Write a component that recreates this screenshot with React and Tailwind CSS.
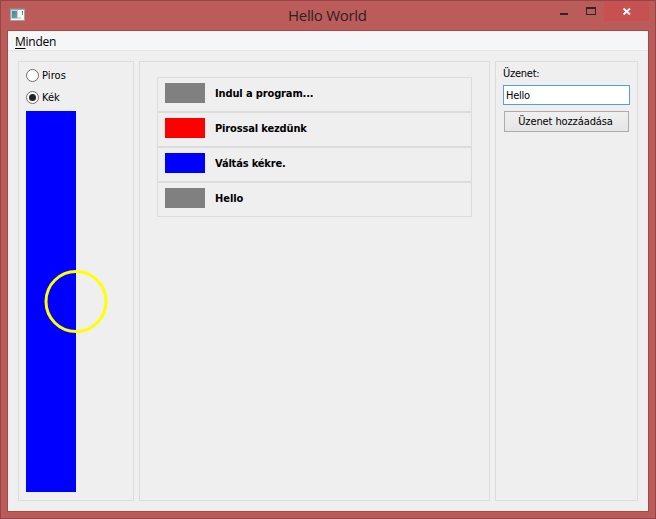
const messages = [
  { text: 'Indul a program...', swatch: 'bg-[#808080]', tracking: 'tracking-[-0.13px]' },
  { text: 'Pirossal kezdünk', swatch: 'bg-[#ff0000]', tracking: 'tracking-[-0.15px]' },
  { text: 'Váltás kékre.', swatch: 'bg-[#0000ff]', tracking: 'tracking-[-0.17px]' },
  { text: 'Hello', swatch: 'bg-[#808080]', tracking: 'tracking-[-0.05px]' },
];

function AppIcon() {
  return (
    <svg width="15" height="13" viewBox="0 0 15 13" shapeRendering="crispEdges">
      <defs>
        <linearGradient id="screen" x1="0" y1="0" x2="1" y2="1">
          <stop offset="0" stopColor="#4c79ab" />
          <stop offset="1" stopColor="#58b888" />
        </linearGradient>
        <linearGradient id="side" x1="0" y1="0" x2="0" y2="1">
          <stop offset="0" stopColor="#2f5fa8" />
          <stop offset="1" stopColor="#58b888" />
        </linearGradient>
      </defs>
      <rect width="15" height="13" fill="#a3a3a3" />
      <rect x="1" y="2" width="13" height="10" fill="#f6f8f8" />
      <rect x="0" y="0" width="15" height="1" fill="#7e8c90" />
      <rect x="1" y="2" width="7" height="9" fill="#c5d3d7" />
      <rect x="2" y="3" width="5" height="7" fill="url(#screen)" />
      <rect x="12" y="3" width="1" height="4" fill="url(#side)" />
      <rect x="8" y="9" width="3" height="2" fill="#d3d5d6" />
    </svg>
  );
}

function TitleBar() {
  return (
    <div className="flex h-[29px] items-start">
      <div className="w-[90px] pl-[9px] pt-[7px]">
        <AppIcon />
      </div>
      <div className="flex-1 pl-[197px] pt-[3px] font-['Open_Sans',sans-serif] text-[15px] leading-[22px] tracking-[-0.3px] text-[#2b2222] whitespace-nowrap">
        Hello World
      </div>
      <svg className="mr-1.5" width="97" height="20" viewBox="0 0 97 20">
        <rect x="8" y="12" width="8" height="2" fill="#2b2727" />
        <path d="M34 6h10v8H34zM35 8v5h8V8z" fill="#2b2727" fillRule="evenodd" />
        <rect x="52" y="0" width="45" height="20" fill="#c75050" />
        <path d="M71.5 7.5l6.5 6M78 7.5l-6.5 6" stroke="#fff" strokeWidth="1.8" />
      </svg>
    </div>
  );
}

function Radio({ label, checked, spacing }) {
  return (
    <div className="flex h-[22px] items-start gap-[3px] pt-1">
      <svg width="13" height="13" viewBox="0 0 13 13">
        <circle cx="6.5" cy="6.5" r="6" fill="#fff" stroke="#6d6d6d" />
        {checked && <circle cx="6.5" cy="6.5" r="3.5" fill="#222" />}
      </svg>
      <span className={spacing}>{label}</span>
    </div>
  );
}

export default function App() {
  return (
    <div className="flex h-[519px] w-[656px] flex-col overflow-hidden border border-[#934646] bg-[#bc5c5a] font-['DejaVu_Sans_Condensed','DejaVu_Sans',sans-serif] text-[11px] leading-[14px] text-black">
      <TitleBar />
      <div className="mx-1.5 flex h-[482px] w-[642px] flex-col border border-[#a04b4a] bg-[#efefef]">
        <div className="h-5 border-b border-[#e5e6e8] bg-[#f5f6f8] pl-[7px] font-['Open_Sans',sans-serif] text-[12px] leading-[21px] tracking-[-0.25px]">
          <span className="underline decoration-1 underline-offset-2">M</span>inden
        </div>
        <div className="mx-2.5 mt-2.5 flex h-[440px] gap-[5px]">
          <section className="relative w-[116px] border border-[#dcdcdc] pl-[7px] pt-[3px]">
            <Radio label="Piros" spacing="tracking-[0.1px]" />
            <Radio label="Kék" checked spacing="tracking-[0px]" />
            <div className="mt-0.5 h-[381px] w-[50px] bg-[#0000ff]" />
            <svg className="absolute left-[25px] top-[207px]" width="64" height="65" viewBox="0 0 64 65">
              <circle cx="32" cy="32.5" r="30" fill="none" stroke="#ffff00" strokeWidth="3" />
            </svg>
          </section>
          <section className="w-[351px] border border-[#dcdcdc] pl-[17px] pt-[15px]">
            {messages.map((m) => (
              <div key={m.text} className="flex h-[35px] w-[315px] border border-[#dcdcdc] pl-[7px] pt-[5px]">
                <div className={`h-5 w-10 ${m.swatch}`} />
                <span className={`ml-2.5 font-bold leading-[22px] whitespace-nowrap ${m.tracking}`}>{m.text}</span>
              </div>
            ))}
          </section>
          <section className="w-[143px] border border-[#dcdcdc] pl-[7px] pt-[5px]">
            <div className="tracking-[-0.25px]">Üzenet:</div>
            <div className="mt-1 h-5 w-[127px] border border-[#569de5] bg-white pl-0.5 leading-[20px] tracking-[-0.25px]">Hello</div>
            <button className="ml-px mt-1.5 block h-[21px] w-[125px] border border-[#acacac] bg-linear-to-b from-[#f0f0f0] to-[#e5e5e5] pr-0.5 text-center leading-[20px] tracking-[-0.1px] whitespace-nowrap">
              Üzenet hozzáadása
            </button>
          </section>
        </div>
      </div>
    </div>
  );
}
